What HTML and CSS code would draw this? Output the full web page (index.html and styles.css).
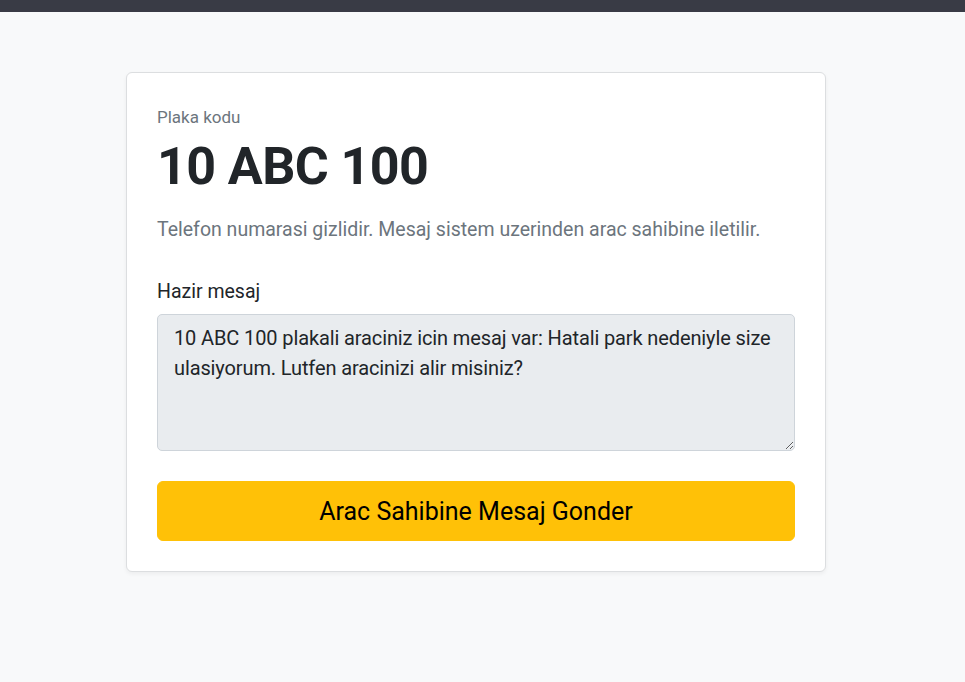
FILE: index.html
```html
<!DOCTYPE html>
<html lang="tr">
<head>
    <meta charset="UTF-8">
    <title>Plaka Mesaj</title>
    <link rel="stylesheet" href="styles.css">
</head>
<body>
    <div class="topbar"></div>

    <div class="page">
        <div class="card">
            <div class="plate-label">Plaka kodu</div>
            <h1 class="plate">10 ABC 100</h1>
            <p class="info">Telefon numarasi gizlidir. Mesaj sistem uzerinden arac sahibine iletilir.</p>

            <label class="form-label" for="message">Hazir mesaj</label>
            <textarea id="message" class="message" rows="4" readonly>10 ABC 100 plakali araciniz icin mesaj var: Hatali park nedeniyle size ulasiyorum. Lutfen aracinizi alir misiniz?</textarea>

            <button class="send-button">Arac Sahibine Mesaj Gonder</button>
        </div>
    </div>
</body>
</html>
```

FILE: styles.css
```css
body {
    font-family: Roboto, "Liberation Sans", sans-serif;
    margin: 0;
    background: #f8f9fa;
    color: #212529;
}

.topbar {
    height: 12px;
    background: #393b45;
}

.page {
    padding: 60px 0;
}

.card {
    width: 700px;
    box-sizing: border-box;
    margin-left: 126px;
    background: #fff;
    border: 1px solid #dcdee0;
    border-radius: 6px;
    box-shadow: 0 2px 4px rgba(0, 0, 0, 0.05);
    padding: 31px 30px 30px 30px;
}

.plate-label {
    color: #6c757d;
    font-size: 17px;
    line-height: 26px;
}

.plate {
    font-size: 52px;
    font-weight: 700;
    letter-spacing: -0.6px;
    line-height: 62px;
    margin: 6px 0 0;
}

.info {
    color: #6c757d;
    font-size: 19.5px;
    line-height: 30px;
    margin: 17px 0 0;
}

.form-label {
    display: block;
    font-size: 19.5px;
    line-height: 29px;
    margin-top: 32px;
}

.message {
    display: block;
    width: 100%;
    box-sizing: border-box;
    height: 137px;
    margin-top: 8px;
    padding: 8px 16px;
    font-family: inherit;
    font-size: 20px;
    letter-spacing: -0.12px;
    line-height: 30px;
    color: #212529;
    background: #e9ecef;
    border: 1px solid #ced4da;
    border-radius: 5px;
    outline: none;
}

.send-button {
    display: block;
    width: 100%;
    height: 60px;
    margin-top: 30px;
    font-family: inherit;
    font-size: 25px;
    color: #000;
    background: #ffc107;
    border: 1px solid #ffc107;
    border-radius: 6px;
    cursor: pointer;
}
```
